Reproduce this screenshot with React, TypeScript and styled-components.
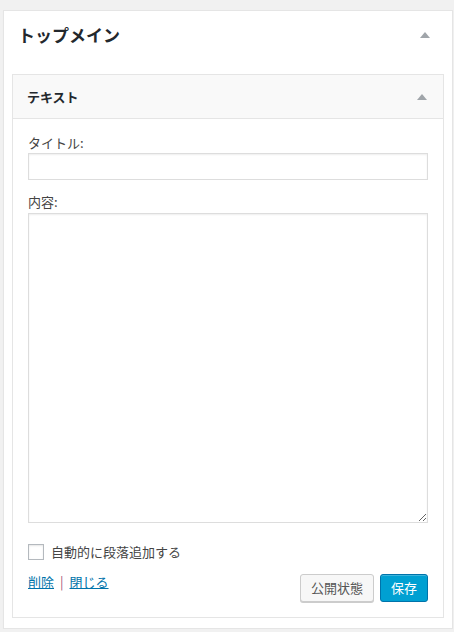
import styled, { createGlobalStyle } from "styled-components";

const GlobalStyle = createGlobalStyle`
  html, body {
    margin: 0;
    padding: 0;
    background: #f1f1f1;
  }
  body {
    font-family: "Noto Sans CJK JP", "Noto Sans", sans-serif;
    color: #444;
    font-size: 13px;
  }
  * {
    box-sizing: border-box;
  }
`;

const Arrow = () => (
  <svg width="10" height="6" viewBox="0 0 10 6">
    <path d="M0 6 L5 0 L10 6 Z" fill="#a0a5aa" />
  </svg>
);

const App = () => {
  return (
    <>
      <GlobalStyle />
      <Page>
        <Sidebar>
          <SidebarHead>
            <SidebarTitle>トップメイン</SidebarTitle>
            <Toggle $right={2}>
              <Arrow />
            </Toggle>
          </SidebarHead>
          <Widget>
            <WidgetHead>
              <WidgetTitle>テキスト</WidgetTitle>
              <Toggle $right={4}>
                <Arrow />
              </Toggle>
            </WidgetHead>
            <WidgetBody>
              <Label>タイトル:</Label>
              <TextInput type="text" />
              <Label>内容:</Label>
              <TextArea />
              <CheckRow>
                <CheckBox type="checkbox" />
                <span>自動的に段落追加する</span>
              </CheckRow>
              <Actions>
                <Links>
                  <Link href="#">削除</Link>
                  <Sep>|</Sep>
                  <Link href="#">閉じる</Link>
                </Links>
                <Buttons>
                  <Button>公開状態</Button>
                  <Button $primary>保存</Button>
                </Buttons>
              </Actions>
            </WidgetBody>
          </Widget>
        </Sidebar>
      </Page>
    </>
  );
};

export default App;

const Page = styled.div`
  padding: 10px 2px 0 3px;
`;

const Sidebar = styled.div`
  width: 450px;
  height: 619px;
  background: #fff;
  border: 1px solid #e5e5e5;
  box-shadow: 0 1px 1px rgba(0, 0, 0, 0.04);
  padding: 0 8px;
`;

const SidebarHead = styled.div`
  display: flex;
  align-items: center;
  justify-content: space-between;
  height: 47px;
  padding-left: 6px;
  margin-bottom: 16px;
`;

const SidebarTitle = styled.h2`
  margin: 0;
  font-size: 17px;
  font-weight: 700;
  color: #23282d;
`;

const Toggle = styled.span<{ $right: number }>`
  display: flex;
  width: 34px;
  justify-content: center;
  padding-right: ${(p) => p.$right}px;
  box-sizing: content-box;
`;

const Widget = styled.div`
  border: 1px solid #e5e5e5;
  background: #fff;
`;

const WidgetHead = styled.div`
  display: flex;
  align-items: center;
  justify-content: space-between;
  height: 44px;
  background: #f9f9f9;
  border-bottom: 1px solid #e5e5e5;
  padding-left: 14px;
`;

const WidgetTitle = styled.h3`
  margin: 0;
  font-size: 13px;
  font-weight: 700;
  color: #23282d;
`;

const WidgetBody = styled.div`
  padding: 15px 15px 15px;
  display: flex;
  flex-direction: column;
`;

const Label = styled.label`
  display: block;
  font-size: 13px;
  line-height: 18px;
  color: #444;
  margin-bottom: 1px;
`;

const TextInput = styled.input`
  width: 400px;
  height: 27px;
  border: 1px solid #ddd;
  box-shadow: inset 0 1px 2px rgba(0, 0, 0, 0.07);
  margin: 0 0 13px;
  padding: 3px 5px;
`;

const TextArea = styled.textarea`
  width: 400px;
  height: 310px;
  border: 1px solid #ddd;
  box-shadow: inset 0 1px 2px rgba(0, 0, 0, 0.07);
  margin: 1px 0 0;
  padding: 2px 6px;
  font-family: inherit;
  display: block;
`;

const CheckRow = styled.label`
  display: flex;
  align-items: center;
  gap: 7px;
  margin-top: 21px;
  font-size: 13px;
  line-height: 16px;
  color: #444;
`;

const CheckBox = styled.input`
  appearance: none;
  width: 16px;
  height: 16px;
  margin: 0;
  border: 1px solid #b4b9be;
  background: #fff;
  box-shadow: inset 0 1px 2px rgba(0, 0, 0, 0.1);
`;

const Actions = styled.div`
  display: flex;
  justify-content: space-between;
  align-items: flex-start;
  margin-top: 14px;
`;

const Links = styled.div`
  display: flex;
  gap: 6px;
  line-height: 16px;
`;

const Link = styled.a`
  color: #0073aa;
  text-decoration: underline;
  font-size: 13px;
`;

const Sep = styled.span`
  color: #a8587a;
  font-size: 13px;
`;

const Buttons = styled.div`
  display: flex;
  gap: 6px;
`;

const Button = styled.button<{ $primary?: boolean }>`
  height: 28px;
  padding: 0 10px 1px;
  font-family: inherit;
  font-size: 13px;
  border-radius: 3px;
  border: 1px solid ${(p) => (p.$primary ? "#0073aa" : "#ccc")};
  background: ${(p) => (p.$primary ? "#00a0d2" : "#f7f7f7")};
  color: ${(p) => (p.$primary ? "#fff" : "#555")};
  box-shadow: ${(p) =>
    p.$primary ? "inset 0 1px 0 rgba(120, 200, 230, 0.5)" : "0 1px 0 #ccc"};
  cursor: pointer;
`;
